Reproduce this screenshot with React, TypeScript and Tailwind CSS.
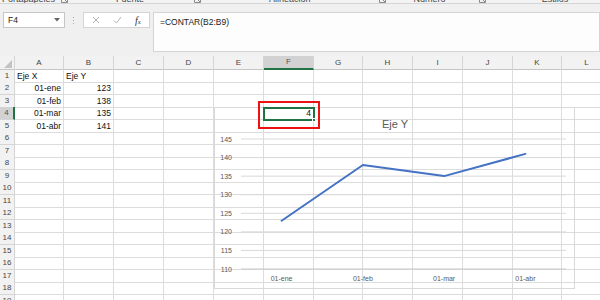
import React from "react";

const gridCols =
  "grid grid-cols-[15px_49px_50px_50px_50px_50px_50px_49px_50px_50px_50px_49px_50px]";
const letters = ["A", "B", "C", "D", "E", "F", "G", "H", "I", "J", "K", "L"];
const rows = Array.from({ length: 19 }, (_, i) => i + 1);

const cells: Record<string, { t: string; right?: boolean }> = {
  A1: { t: "Eje X" },
  B1: { t: "Eje Y" },
  A2: { t: "01-ene", right: true },
  B2: { t: "123", right: true },
  A3: { t: "01-feb", right: true },
  B3: { t: "138", right: true },
  A4: { t: "01-mar", right: true },
  B4: { t: "135", right: true },
  A5: { t: "01-abr", right: true },
  B5: { t: "141", right: true },
  F4: { t: "4", right: true },
};

const points = [
  { label: "01-ene", v: 123 },
  { label: "01-feb", v: 138 },
  { label: "01-mar", v: 135 },
  { label: "01-abr", v: 141 },
];

// dialog launcher in the ribbon group footer
function Launcher({ className }: { className: string }) {
  return (
    <svg className={className} width="7" height="7" viewBox="0 0 7 7">
      <path d="M0.5 0.5h6v6h-6z" fill="none" stroke="#8a8a8a" strokeWidth="1" />
      <path d="M3 3l3 3" stroke="#8a8a8a" strokeWidth="1" />
    </svg>
  );
}

function Ribbon() {
  return (
    <div className="h-[4px] overflow-hidden border-b border-[#d5d5d5] bg-[#f3f3f3] text-[9px] leading-[9px] text-[#444]">
      <div className="-mt-[5px] flex items-start">
        <span className="ml-[2px]">Portapapeles</span>
        <Launcher className="ml-[6px] mt-[1px]" />
        <span className="ml-[48px]">Fuente</span>
        <Launcher className="ml-[50px] mt-[1px]" />
        <span className="ml-[68px]">Alineación</span>
        <Launcher className="ml-[68px] mt-[1px]" />
        <span className="ml-[28px]">Número</span>
        <Launcher className="ml-[33px] mt-[1px]" />
        <span className="ml-[56px]">Estilos</span>
      </div>
    </div>
  );
}

function FormulaBar() {
  return (
    <div className="flex h-[52px] bg-[#f0f0f0] pt-[8px]">
      <div className="ml-[3px] flex h-[16px] w-[62px] items-center justify-between border border-[#c6c6c6] bg-white pl-[4px] pr-[4px] text-[8.5px] text-[#222]">
        <span>F4</span>
        <svg width="6" height="4" viewBox="0 0 6 4">
          <path d="M0 0h6L3 3.5z" fill="#666" />
        </svg>
      </div>
      <div className="ml-[8px] flex h-[16px] flex-col items-center justify-center gap-[2px]">
        <span className="h-[1px] w-[1px] bg-[#aaa]" />
        <span className="h-[1px] w-[1px] bg-[#aaa]" />
        <span className="h-[1px] w-[1px] bg-[#aaa]" />
      </div>
      <div className="ml-[9px] flex h-[16px] w-[67px] items-center border border-[#d4d4d4] bg-white">
        <svg className="ml-[8px]" width="8" height="8" viewBox="0 0 8 8">
          <path d="M1 1l6 6M7 1L1 7" stroke="#b4b4b4" strokeWidth="1" />
        </svg>
        <svg className="ml-[13px]" width="9" height="8" viewBox="0 0 9 8">
          <path d="M1 4.5l2.5 2.5L8 1" stroke="#b4b4b4" strokeWidth="1" fill="none" />
        </svg>
        <span className="ml-[13px] font-['Liberation_Serif'] text-[10px] italic text-[#333]">
          f<span className="text-[7px]">x</span>
        </span>
      </div>
      <div className="ml-[3px] h-[40px] flex-1 border border-[#d4d4d4] bg-[#fdfdfd] pl-[6px] pt-[3px] text-[8.5px] text-[#222]">
        =CONTAR(B2:B9)
      </div>
    </div>
  );
}

function Sheet() {
  return (
    <div className="bg-white">
      <div className={`${gridCols} h-[14px] border-b border-[#c6c6c6] bg-[#f2f2f2] text-[8px] text-[#444]`}>
        <div className="flex items-end justify-end border-r border-[#d5d5d5] pb-[2px] pr-[2px]">
          <svg width="8" height="8" viewBox="0 0 8 8">
            <path d="M8 0v8H0z" fill="#c3c3c3" />
          </svg>
        </div>
        {letters.map((l) => (
          <div
            key={l}
            className={
              l === "F"
                ? "flex items-center justify-center border-r border-b-2 border-r-[#d5d5d5] border-b-[#217346] bg-[#d2d2d2] text-[#555]"
                : "flex items-center justify-center border-r border-[#d5d5d5]"
            }
          >
            {l}
          </div>
        ))}
      </div>
      {rows.map((r) => (
        <div key={r} className={`${gridCols} ${r % 2 === 1 ? "h-[12px]" : "h-[13px]"}`}>
          <div
            className={
              r === 4
                ? "flex items-center justify-center border-r-2 border-b border-r-[#217346] border-b-[#d5d5d5] bg-[#d2d2d2] text-[8px] text-[#555]"
                : "flex items-center justify-center border-r border-b border-[#d5d5d5] bg-[#f2f2f2] text-[8px] text-[#444]"
            }
          >
            {r}
          </div>
          {letters.map((l) => {
            const c = cells[`${l}${r}`];
            return (
              <div
                key={l}
                className={`flex items-center overflow-hidden whitespace-nowrap border-r border-b border-[#dcdcdc] px-[2px] text-[8.5px] leading-none text-[#111] ${
                  c?.right ? "justify-end" : "justify-start"
                }`}
              >
                {c?.t}
              </div>
            );
          })}
        </div>
      ))}
    </div>
  );
}

function Chart() {
  const yOf = (v: number) => 161 - (v - 110) * (130 / 35);
  const xOf = (i: number) => 26 + 325 / 8 + (325 / 4) * i;
  const ticks = [145, 140, 135, 130, 125, 120, 115, 110];
  const path = points.map((p, i) => `${i ? "L" : "M"}${xOf(i).toFixed(1)} ${yOf(p.v).toFixed(1)}`).join(" ");
  return (
    <div className="absolute left-[214px] top-[107px] h-[182px] w-[361px] border border-[#d9d9d9]">
      <svg width="359" height="180" viewBox="0 0 359 180" fontFamily="'Liberation Sans',sans-serif">
        <text x="180" y="20" textAnchor="middle" fontSize="11" fill="#595959">
          Eje Y
        </text>
        {ticks.map((t) => (
          <g key={t}>
            <line x1="26" x2="351" y1={yOf(t)} y2={yOf(t)} stroke={t === 110 ? "#c8c8c8" : "#d9d9d9"} strokeWidth="1" />
            <text x="17" y={yOf(t) + 2.5} textAnchor="end" fontSize="7" fill="#595959">
              {t}
            </text>
          </g>
        ))}
        {points.map((p, i) => (
          <text key={p.label} x={xOf(i)} y="173" textAnchor="middle" fontSize="7" fill="#595959">
            {p.label}
          </text>
        ))}
        <path d={path} fill="none" stroke="#4472c4" strokeWidth="2" strokeLinejoin="round" strokeLinecap="round" />
      </svg>
    </div>
  );
}

export default function App() {
  return (
    <div className="relative h-[300px] w-[600px] overflow-hidden bg-white font-['Liberation_Sans',sans-serif]">
      <Ribbon />
      <FormulaBar />
      <Sheet />
      <Chart />
      <div className="absolute left-[263px] top-[107px] h-[14px] w-[52px] border-2 border-[#217346]" />
      <div className="absolute left-[312px] top-[118px] h-[4px] w-[4px] border border-white bg-[#217346]" />
      <div className="absolute left-[258px] top-[101px] h-[28px] w-[62px] border-2 border-[#ee1111]" />
    </div>
  );
}
